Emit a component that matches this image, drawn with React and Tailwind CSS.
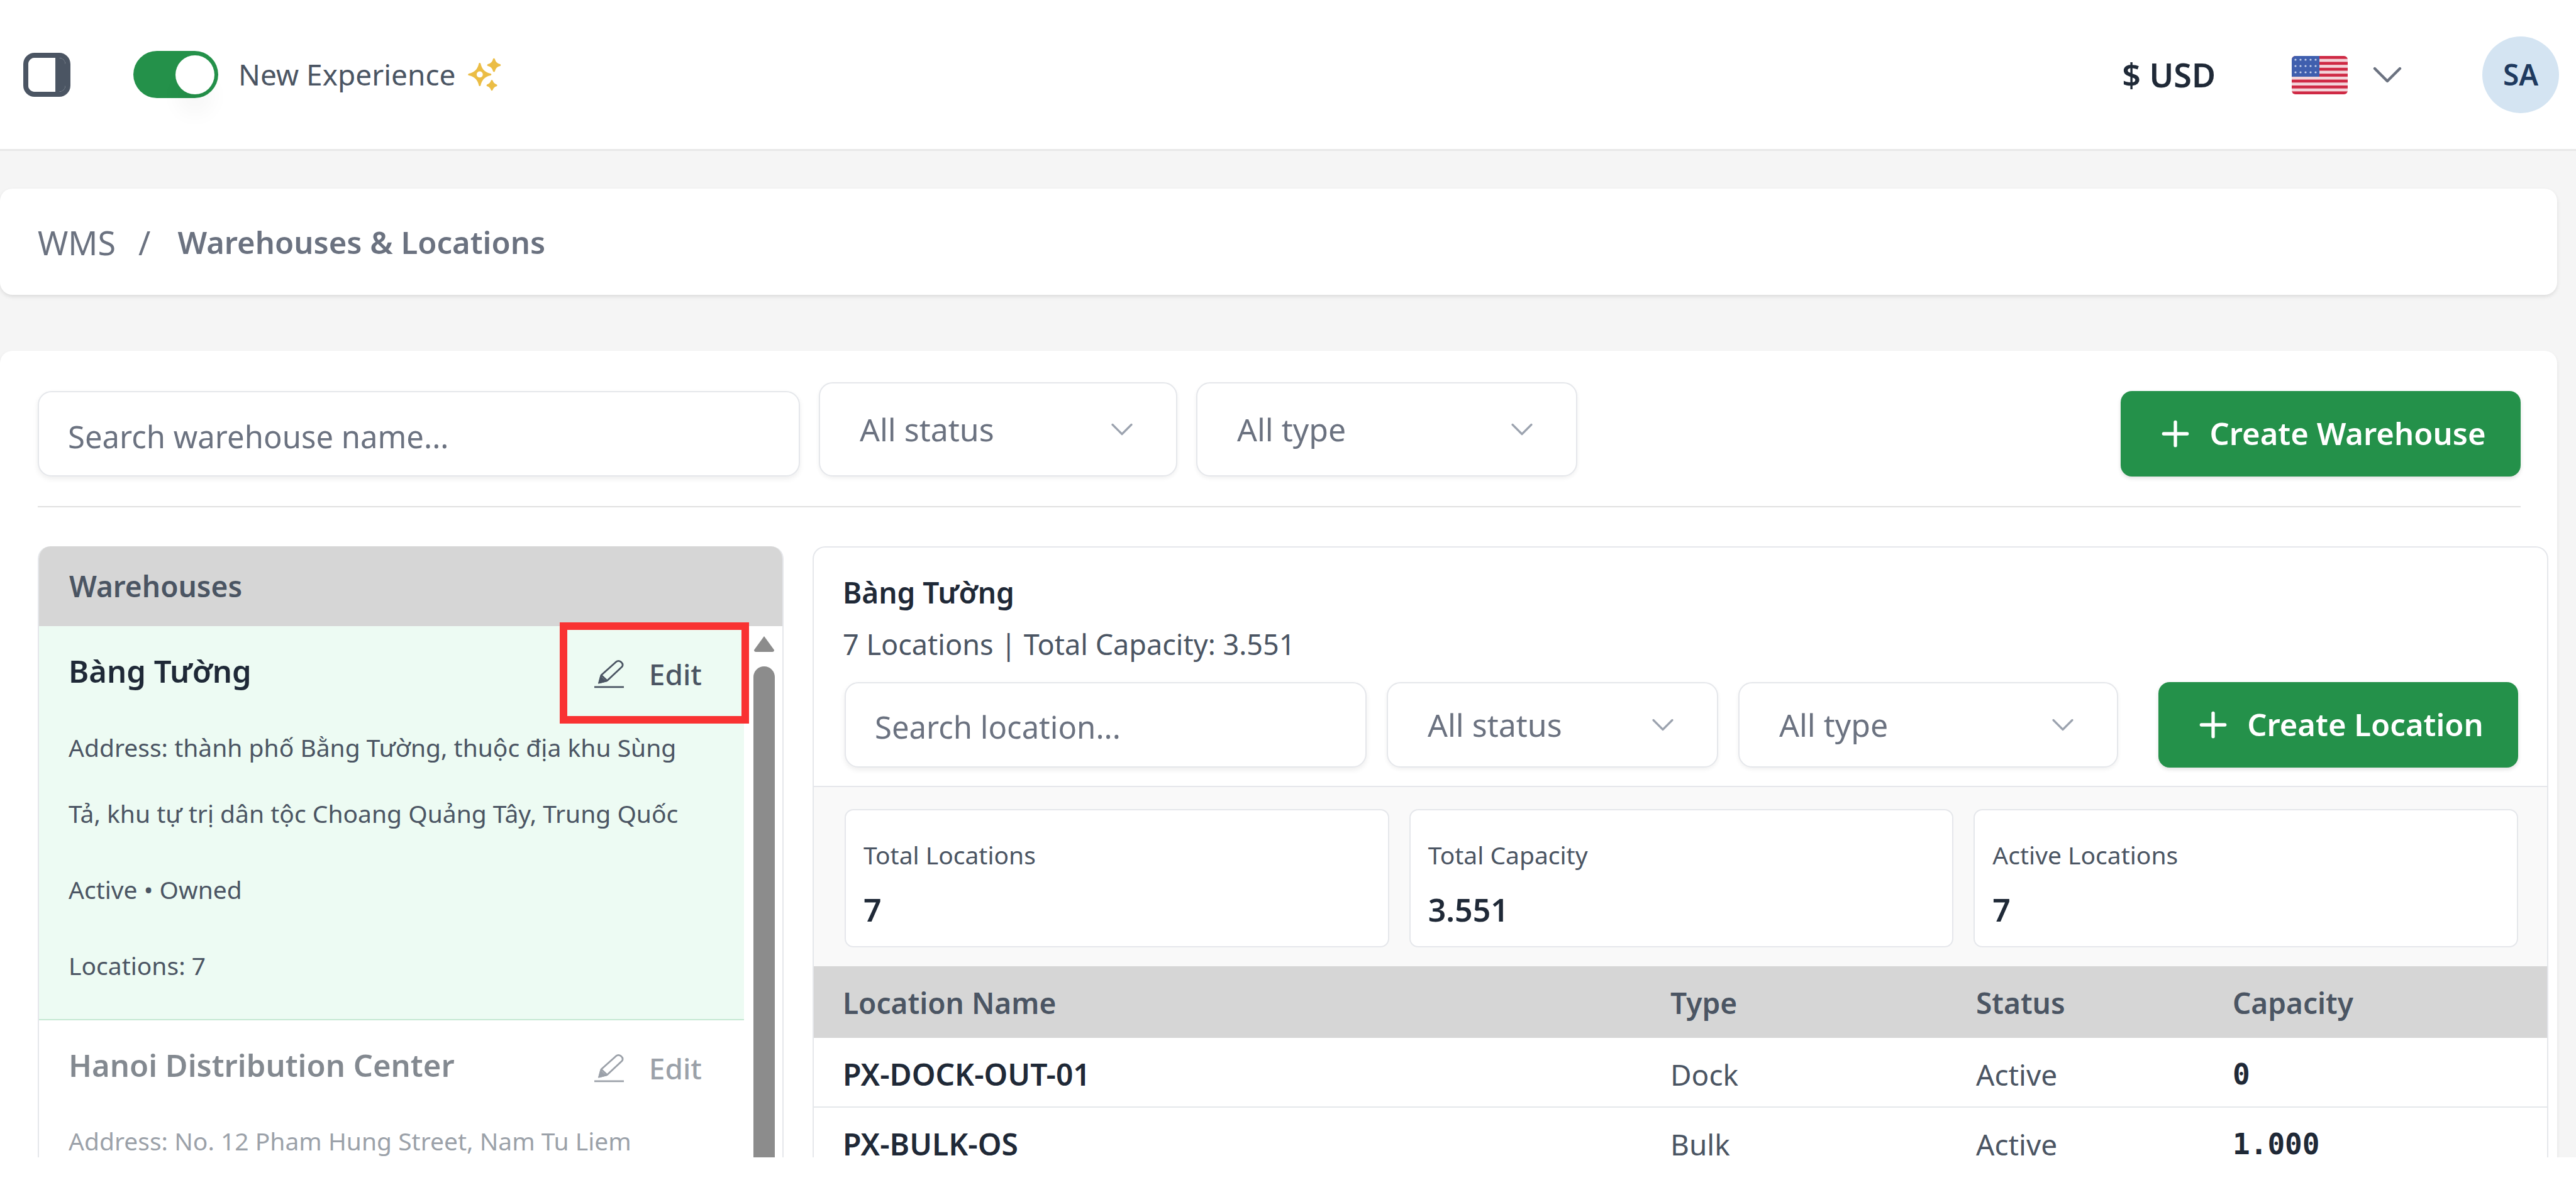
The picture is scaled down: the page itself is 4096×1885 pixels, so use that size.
import React from 'react'
import { ChevronDown, Plus } from 'lucide-react'

const Flag = () => (
  <svg width="89" height="61" viewBox="0 0 89 61" className="rounded-[6px]">
    <rect width="89" height="61" fill="#f3d5da" />
    {[0, 2, 4, 6, 8, 10, 12].map(i => (
      <rect key={i} y={i * 4.7} width="89" height="4.7" fill="#cf2a45" />
    ))}
    <rect width="44" height="33" fill="#3f5fae" />
    {[6, 16, 26].map(y =>
      [6, 14, 22, 30, 38].map(x => <circle key={x + '-' + y} cx={x} cy={y} r="1.6" fill="#c9d3ec" />)
    )}
  </svg>
)

const Sparkle = () => (
  <svg width="54" height="54" viewBox="0 0 210 210" fill="#ebbd45" stroke="#ebbd45" strokeWidth="12" strokeLinejoin="round">
    <path
      fillRule="evenodd"
      d="M77 37 Q88 92 143 103 Q88 114 77 169 Q66 114 11 103 Q66 92 77 37 Z M77 78 A25 25 0 1 0 77 128 A25 25 0 1 0 77 78 Z"
    />
    <path d="M165 9 Q172 38 201 45 Q172 52 165 81 Q158 52 129 45 Q158 38 165 9 Z" />
    <path d="M152 143 Q158 164 179 170 Q158 176 152 197 Q146 176 125 170 Q146 164 152 143 Z" />
  </svg>
)

const Pencil = ({ color }) => (
  <svg width="47" height="47" viewBox="0 0 60 60" fill="none" stroke={color} strokeWidth="3.5" className="shrink-0">
    <path d="M10 47 L14 32 L44 5 Q49 1 54 5 Q60 10 56 15 L26 43 Z" strokeLinejoin="round" />
    <path d="M14 32 L26 43" />
    <path d="M10 47 L13 36 L22 44 Z" fill={color} />
    <path d="M0 56 H60" />
  </svg>
)

const Select = ({ label, className }) => (
  <div
    className={`flex items-center justify-between rounded-[22px] border-2 border-[#e5e7eb] bg-white pl-[63px] pr-[56px] text-[50px] text-[#6b7280] shadow-[0_3px_6px_rgba(0,0,0,0.06)] ${className}`}
  >
    <span>{label}</span>
    <ChevronDown size={60} strokeWidth={1.3} className="text-[#9ca3af]" />
  </div>
)

const Search = ({ placeholder, className }) => (
  <input
    placeholder={placeholder}
    className={`rounded-[22px] border-2 border-[#e5e7eb] bg-white px-[46px] pt-[8px] text-[49px] text-[#374151] shadow-[0_4px_8px_rgba(0,0,0,0.07)] outline-none placeholder:text-[#6b7280] ${className}`}
  />
)

const CreateButton = ({ label, className }) => (
  <button
    className={`ml-auto flex items-center justify-center gap-[22px] rounded-[18px] bg-[#24914a] text-[49px] font-semibold text-white shadow-[0_3px_6px_rgba(0,0,0,0.12)] ${className}`}
  >
    <Plus size={64} strokeWidth={2} />
    {label}
  </button>
)

const WarehouseRow = ({ name, lines, selected }) => (
  <div
    className={`border-b-2 pb-[33px] pl-[47px] pr-[67px] pt-[41px] ${
      selected ? 'border-[#c5e8d2] bg-[#edfbf3]' : 'border-[#e5e7eb] bg-white'
    }`}
  >
    <div className={selected ? '' : 'opacity-55'}>
      <div className="flex items-start justify-between">
        <h3 className="text-[49px] font-semibold leading-[60px] text-[#1f2937]">{name}</h3>
        <button className="flex h-[60px] items-center gap-[40px] pt-[10px] text-[46px] font-medium text-[#4b5563]">
          <Pencil color="#4b5563" />
          Edit
        </button>
      </div>
      {selected ? (
        lines.map((line, i) => (
          <p key={i} className={`text-[39px] leading-[105px] text-[#4b5563] ${i === 0 ? 'mt-[39px]' : 'mt-[16px]'}`}>
            {line}
          </p>
        ))
      ) : (
        <p className="mt-[66px] text-[39px] leading-[50px] text-[#4b5563]">{lines[0]}</p>
      )}
    </div>
  </div>
)

const Stat = ({ label, value }) => (
  <div className="flex h-[220px] flex-1 flex-col rounded-[14px] border-2 border-[#e5e7eb] bg-white pl-[28px] pt-[46px]">
    <span className="text-[39px] leading-[50px] text-[#4b5563]">{label}</span>
    <span className="mt-[36px] text-[50px] font-semibold leading-[52px] text-[#1f2937]">{value}</span>
  </div>
)

const rowClass = 'grid grid-cols-[1316px_486px_408px_1fr] items-center pl-[46px]'

const LocationRow = ({ name, type, status, capacity }) => (
  <div className={`${rowClass} h-[111px] border-b-2 border-[#e5e7eb] pt-[6px] text-[46px] leading-[40px] text-[#4b5563]`}>
    <span className="text-[48px] font-semibold text-[#1f2937]">{name}</span>
    <span>{type}</span>
    <span>{status}</span>
    <span className="font-['DejaVu_Sans_Mono',monospace] text-[46px] font-bold text-[#1f2937]">{capacity}</span>
  </div>
)

export default function App() {
  return (
    <div className="h-screen bg-white font-['Noto_Sans',sans-serif]">
      <div className="relative h-[1841px] overflow-hidden bg-[#f5f5f5]">
        <header className="flex h-[240px] items-center border-b-[3px] border-[#e8e8e8] bg-white pl-[37px] pr-[27px]">
          <div className="flex h-[70px] w-[75px] overflow-hidden rounded-[18px] border-[8px] border-[#4b5563]">
            <div className="flex-1 bg-white" />
            <div className="w-[16px] bg-[#4b5563]" />
          </div>
          <div className="ml-[100px] flex h-[75px] w-[135px] items-center justify-end rounded-full bg-[#24914a] pr-[6px]">
            <div className="h-[62px] w-[62px] rounded-full bg-white shadow-[0_34px_30px_rgba(0,0,0,0.03)]" />
          </div>
          <span className="ml-[32px] text-[46px] text-[#4b5563]">New Experience</span>
          <span className="ml-[18px]">
            <Sparkle />
          </span>
          <span className="ml-auto text-[52px] font-semibold text-[#1f2937]">$ USD</span>
          <span className="ml-[121px] pt-[2px]">
            <Flag />
          </span>
          <ChevronDown size={80} strokeWidth={1.3} className="ml-[23px] text-[#6b7280]" />
          <div className="ml-[111px] flex h-[122px] w-[122px] items-center justify-center rounded-full bg-[#d4e4f2] text-[46px] font-semibold text-[#1f3a5f]">
            SA
          </div>
        </header>

        <div className="mt-[60px] flex h-[169px] w-[4066px] items-center rounded-[20px] bg-white pl-[60px] pt-[3px] text-[#6b7280] shadow-[0_3px_6px_rgba(0,0,0,0.1)]">
          <span className="text-[52px]">WMS</span>
          <span className="ml-[36px] text-[52px]">/</span>
          <span className="ml-[43px] text-[49px] font-semibold">Warehouses &amp; Locations</span>
        </div>

        <main className="mt-[89px] w-[4066px] rounded-[20px] bg-white pl-[60px] pr-[16px] pt-[50px] shadow-[0_3px_6px_rgba(0,0,0,0.08)]">
          <div className="flex h-[150px] items-end gap-[30px] pr-[42px]">
            <Search placeholder="Search warehouse name..." className="h-[136px] w-[1212px]" />
            <Select label="All status" className="h-[150px] w-[570px]" />
            <Select label="All type" className="h-[150px] w-[606px]" />
            <CreateButton label="Create Warehouse" className="h-[136px] w-[636px]" />
          </div>
          <div className="mr-[42px] mt-[47px] h-[2px] bg-[#e0e0e0]" />

          <div className="mt-[62px] flex gap-[46px]">
            <section className="w-[1186px] shrink-0 overflow-hidden rounded-t-[20px] border-x-2 border-[#e5e7eb]">
              <div className="-mx-[2px] flex h-[127px] items-center bg-[#d6d6d6] pl-[50px] text-[46px] font-semibold text-[#4b5563]">
                Warehouses
              </div>
              <div className="flex">
                <div className="w-[1121px]">
                  <WarehouseRow
                    selected
                    name="Bàng Tường"
                    lines={[
                      'Address: thành phố Bằng Tường, thuộc địa khu Sùng Tả, khu tự trị dân tộc Choang Quảng Tây, Trung Quốc',
                      'Active • Owned',
                      'Locations: 7',
                    ]}
                  />
                  <WarehouseRow name="Hanoi Distribution Center" lines={['Address: No. 12 Pham Hung Street, Nam Tu Liem']} />
                </div>
                <div className="flex flex-1 flex-col items-center pl-[2px] pt-[15px]">
                  <svg width="34" height="26" viewBox="0 0 34 26" fill="#8c8c8c">
                    <path d="M17 1 L33 23 Q33 26 30 26 H4 Q1 26 1 23 Z" />
                  </svg>
                  <div className="mt-[23px] h-[900px] w-[34px] rounded-t-full bg-[#8c8c8c]" />
                </div>
              </div>
            </section>

            <section className="w-[2760px] shrink-0 overflow-hidden rounded-t-[20px] border-x-2 border-t-2 border-[#e5e7eb]">
              <div className="border-b-2 border-[#e5e7eb] pb-[29px] pl-[46px] pr-[46px] pt-[41px]">
                <h2 className="text-[46px] font-semibold leading-[60px] text-[#1f2937]">Bàng Tường</h2>
                <p className="mt-[23px] text-[45px] leading-[60px] text-[#4b5563]">7 Locations | Total Capacity: 3.551</p>
                <div className="ml-[3px] mt-[30px] flex h-[136px] items-stretch gap-[32px]">
                  <Search placeholder="Search location..." className="w-[830px]" />
                  <Select label="All status" className="w-[527px]" />
                  <Select label="All type" className="w-[604px]" />
                  <CreateButton label="Create Location" className="w-[572px]" />
                </div>
              </div>
              <div className="flex gap-[32px] bg-[#f9f9f9] pb-[30px] pl-[49px] pr-[46px] pt-[35px]">
                <Stat label="Total Locations" value="7" />
                <Stat label="Total Capacity" value="3.551" />
                <Stat label="Active Locations" value="7" />
              </div>
              <div className={`${rowClass} h-[114px] bg-[#d6d6d6] pt-[3px] text-[46px] font-semibold text-[#4b5563]`}>
                <span>Location Name</span>
                <span>Type</span>
                <span>Status</span>
                <span>Capacity</span>
              </div>
              <LocationRow name="PX-DOCK-OUT-01" type="Dock" status="Active" capacity="0" />
              <LocationRow name="PX-BULK-OS" type="Bulk" status="Active" capacity="1.000" />
            </section>
          </div>
        </main>

        {/* annotation box from the screenshot */}
        <div className="absolute left-[890px] top-[990px] h-[161px] w-[301px] border-[12px] border-[#f93232]" />
      </div>
    </div>
  )
}
